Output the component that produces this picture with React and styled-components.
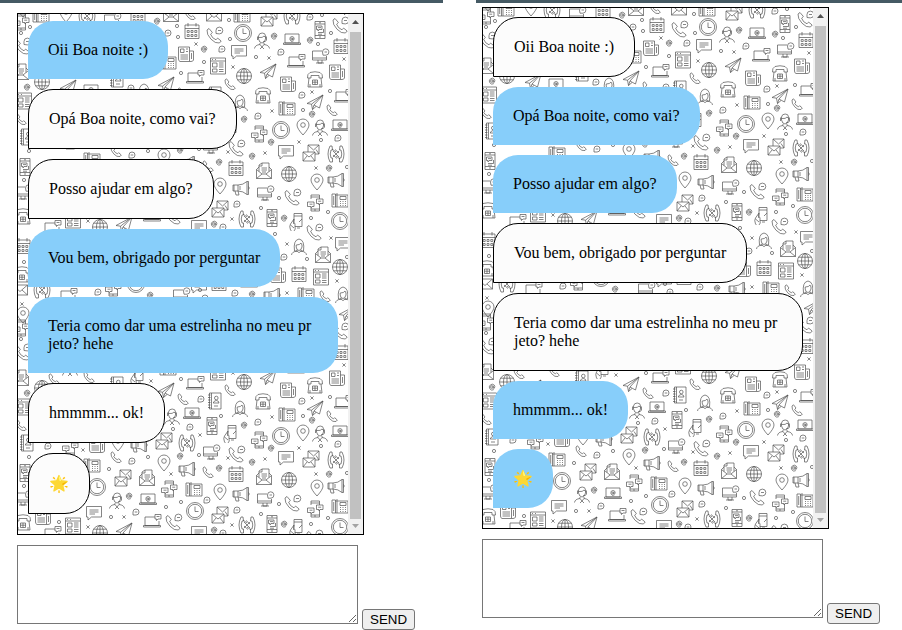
import React, { useId } from "react";
import styled, { createGlobalStyle } from "styled-components";

const GlobalStyle = createGlobalStyle`
  body {
    margin: 0;
    background: #fff;
    color: #000;
    font-family: "Liberation Serif", "Times New Roman", serif;
    font-size: 16px;
    line-height: 18px;
  }
`;

const Page = styled.main`
  display: grid;
  grid-template-columns: 443fr 426fr;
  column-gap: 33px;
`;

const Client = styled.section`
  border-top: 3px solid #455a64;
  padding: ${(p) => (p.$raised ? "4px 0 0 6px" : "10px 0 0 17px")};
`;

const ChatBox = styled.div`
  box-sizing: border-box;
  display: flex;
  width: 100%;
  max-width: 347px;
  min-height: 522px;
  border: 1px solid #000;
`;

const Conversation = styled.div`
  position: relative;
  flex: 1;
  min-width: 0;
  display: flex;
  overflow: hidden;
`;

const WallpaperSvg = styled.svg`
  position: absolute;
  inset: 0;
  width: 100%;
  height: 100%;
`;

const MessageList = styled.ul`
  position: relative;
  flex: 1;
  display: flex;
  flex-direction: column;
  align-items: flex-start;
  justify-content: flex-end;
  gap: 10px;
  margin: 0;
  padding: 0 10px 20px;
  list-style: none;
`;

const Bubble = styled.li`
  align-self: ${(p) => (p.$wide ? "stretch" : "flex-start")};
  padding: 20px;
  border: ${(p) => (p.$mine ? "none" : "1px solid #000")};
  border-radius: 25px 25px 25px 0;
  background: ${(p) => (p.$mine ? "#87cefa" : "#fcfcfc")};
  white-space: pre-line;
  overflow-wrap: anywhere;
`;

const Emoji = styled.span`
  display: block;
  line-height: 19px;
  font-family: "Liberation Serif", "Noto Color Emoji", serif;
`;

const ScrollTrack = styled.div`
  flex: 0 0 15px;
  display: flex;
  flex-direction: column;
  align-items: center;
  background: #f1f1f1;
`;

const ScrollArrow = styled.svg`
  width: 15px;
  height: 15px;
  fill: ${(p) => (p.$dim ? "#a3a3a3" : "#505050")};
`;

const ScrollThumb = styled.div`
  flex: 1;
  width: 11px;
  margin-top: 3px;
  background: #c1c1c1;
`;

const Composer = styled.form`
  display: flex;
  align-items: flex-end;
  gap: 4px;
  margin-top: 10px;
`;

const MessageInput = styled.textarea`
  box-sizing: border-box;
  flex: 0 1 341px;
  min-width: 0;
  height: 79px;
  margin: 0 0 6px;
  border: 1px solid #767676;
  background: #fff;
`;

const SendButton = styled.button`
  height: 21px;
  border: 1px solid #767676;
  border-radius: 3px;
  padding: 0 7px;
  background: #efefef;
  color: #000;
  font-family: "Liberation Sans", Arial, sans-serif;
`;

const ICONS = {
  circle: "M-1.6 0a1.6 1.6 0 1 0 3.2 0a1.6 1.6 0 1 0-3.2 0",
  x: "M-1.6-1.6L1.6 1.6M1.6-1.6L-1.6 1.6",
  at: "M1.2-1.2V1Q1.5 1.8 2.4 1.2Q3.4-.5 2.2-2A2.9 2.9 0 1 0 1.8 2.6M1.2 0A1.3 1.3 0 1 1-1.4 0A1.3 1.3 0 1 1 1.2 0",
  bubble: "M-3 3V0A3 3 0 1 1 0 3ZM-1.3 0H1.3",
  clock:
    "M-8.5 0a8.5 8.5 0 1 0 17 0a8.5 8.5 0 1 0-17 0M-6.7 0a6.7 6.7 0 1 0 13.4 0a6.7 6.7 0 1 0-13.4 0M0-4.5V.5H3.5",
  globe:
    "M-7.5 0a7.5 7.5 0 1 0 15 0a7.5 7.5 0 1 0-15 0M-3.5 0a3.5 7.5 0 1 0 7 0a3.5 7.5 0 1 0-7 0M0-7.5V7.5M-7.5 0H7.5M-6.4-3.8H6.4M-6.4 3.8H6.4",
  calendar:
    "M-7-6H7V7.5H-7ZM-7-2.5H7M-4-8V-4.5M4-8V-4.5M-4.8-.5h2v2h-2zM-1-.5h2v2h-2zM2.8-.5h2v2h-2zM-4.8 3.5h2v2h-2zM-1 3.5h2v2h-2zM2.8 3.5h2v2h-2z",
  page: "M-7.5-8H7.5V8H-7.5ZM-7.5-5H7.5M-5.5-3H-1V1H-5.5ZM1-3H5.5M1-1H5.5M1 1H5.5M-5.5 3H-1V6H-5.5ZM1 3.5H5.5M1 5.5H5.5M-6-6.5h1M-3-6.5h1",
  news: "M-7.5-7H3.5V7.5H-6Q-7.5 7-7.5 5ZM3.5-3H7.5V6Q7 7.5 5 7.5H3.5M-5.5-5H-2V-1.5H-5.5ZM0-5H2M0-2.5H2M-5.5 1H2M-5.5 3H2M-5.5 5H2M5.5-1V5",
  chat: "M-7.5-5.5H7.5V5H-2.5L-6 8V5H-7.5ZM-4.5-2H4.5M-4.5 0H4.5M-4.5 2H1",
  laptopAt:
    "M-7-5H7V4H-7ZM-8.5 4H8.5V5.5H-8.5ZM.9-.8V.8Q1.5 1.3 2.2.4Q2.4-2.5 0-2.5A2.4 2.4 0 1 0 1.4 2M.9 0A1 1 0 1 1-1.1 0A1 1 0 1 1 .9 0",
  laptop: "M3-4H-7V4.5H7V0M-8.5 4.5H8.5V6H-8.5ZM3-6.5H9V-2H6L4.5-.5V-2H3ZM4.5-4.5h3",
  monitor:
    "M2-5H-7.5V4H6.5V0M-7.5 2H6.5M-2 4V7H2V4M-4 7H4M2.5-4A3.2 3.2 0 1 1 6-.8H3ZM4.5-4h2.5",
  phone:
    "M-5-4L-3.5-5.2L-1-2L-2.3-.7Q-1 2 1.5 2.8L2.6 1.7L5.3 4L4 5.5Q1 6.5-2.3 2.8Q-5.5-.6-5-4Z",
  phoneBubble:
    "M-8-5L-6-6.5L-2.6-2.5L-4.4-.8Q-3 3.3 1 4.8L2.6 3.1L6.2 6L4.4 8Q.4 8.8-4 4.2Q-8.5-.5-8-5ZM1-1.5V-4.5A3.4 3.4 0 1 1 4.4-1.1ZM3-4.5H6",
  mobile:
    "M-5-8.5H5V8.5H-5ZM-5-6H5M-5 5.5H5M-1-7.2h2M-1 7h2M-3.5-4H2V-.5H-1L-2 1V-.5H-3.5ZM-2 2.5H3.5V-1M-2-2.4h3M-2 4.2h4",
  links:
    "M-4-4V-8H4.5V-4M4.5 1V8H-4V5M-4-6H4.5M-4 6H4.5M-7.5-1H-1V3.5H-3L-4 5V3.5H-7.5ZM1.5-4H8V.5H5L4 2V.5H1.5ZM-5.5 1.2h3M3.2-1.8h3M-1 7h2",
  hand: "M-2-8.5H6V4.5H-1M-2-8.5V2M-2-6H6M-2 2Q-3 0-2-3L-5.5 2Q-7 4-5.5 8L-4.5 9M-1 1.5V5Q0 7-2 9M1 6h3M6-3L3 0M-5.5 3L-2 6",
  pin: "M0 8Q-6 1.5-6-2A6 6 0 1 1 6-2Q6 1.5 0 8ZM-2.3-2a2.3 2.3 0 1 0 4.6 0a2.3 2.3 0 1 0-4.6 0",
  megaphone:
    "M-8-3H-3V3H-8ZM-3-3Q2-3 6-6.5V6.5Q2 3-3 3M6-6.5h1.5V6.5H6M-7-3V3M-6 3L-5 7H-2L-3 3M7.5-1.5Q9 0 7.5 1.5M-1-2V2",
  mails:
    "M-8-1H4V8H-8ZM-8-1L-2 4L4-1M-8 8L-4 3M4 8L0 3M-3-1V-8H8V1H4M-3-8L2.5-3L8-8M8 1L5-3.5",
  openMail:
    "M-7.5-1.5V7.5H7.5V-1.5L5-4M-5-4L-7.5-1.5L-2 3H2L7.5-1.5M-7.5 7.5L-2 3M7.5 7.5L2 3M-5 .5V-6L-2-8H5V.5M-2-8V-5H-5M-2.5-3H3M-2.5-1H3M-2 1H2",
  mail: "M-7.5-5H7.5V5H-7.5ZM-7.5-5L0 1.5L7.5-5M-7.5 5L-2 0M7.5 5L2 0",
  tel: "M-7.5-1Q-8-5-5-6.5Q0-8 5-6.5Q8-5 7.5-1H4V-3.5H-4V-1ZM-6-1L-7 8H7L6-1M-2.5 1h5V5.5h-5ZM-2.5 3.2h5M0 1v4.5M-5 5V8M5 5V8",
  fax: "M-8-6H-4.5V7H-8ZM-4.5-5H8V7H-4.5M-3-7V7M0-3.5H6V-.5H0ZM0 1.5h1M2.5 1.5h1M5 1.5h1M0 3.5h1M2.5 3.5h1M5 3.5h1M0 5.5h1M2.5 5.5h1M5 5.5h1M-6.3-4V5",
  book: "M-5.5-8H6V8H-5.5ZM-3.5-8V8M-7-6H-4.5M-7-3.5H-4.5M-7-1H-4.5M-7 1.5H-4.5M-7 4H-4.5M-7 6.5H-4.5M-.5-3a1.8 1.8 0 1 0 3.6 0a1.8 1.8 0 1 0-3.6 0M-1.8 2Q-1-.5 1.3-.5Q3.8-.5 4 2ZM-1 5h4",
  plane: "M-8 1.5L8-7L4.5 6L-1 3L8-7L-3.5 2.2L-2.5 7.5L-1 3M-2.5 7.5L1 4.5M-8 1.5L-3.5 2.2",
  man: "M-3.5-2V-5Q-3-8 .2-8Q3.5-8 3.5-5V-2Q2.5 2 0 2Q-2.5 2-3.5-2ZM-3.5-3.5Q1-3 2-5L3.5-3.5M-4.5-4.5V-1M4.5-4.5V-1Q4 1 1 .8M-7.5 7.5Q-7 4-2 3.5V2M2 2V3.5Q7 4 7.5 7.5M-2 3.5L0 6L2 3.5M0 6L-2 8M0 6L2 8",
  woman:
    "M-4.5 4Q-6-7 0-8Q6-7 4.5 4M-2.8-2Q1-2 2-4L3-2V0Q2 3.5 0 3.5Q-2.5 3.5-2.8 0ZM-7.5 8Q-7 4.5-2 4.2V2.8M2 2.8V4.2Q7 4.5 7.5 8M-2 4.2Q0 7 2 4.2M-4.5 4H-2M2 4h2.5",
  phones:
    "M-4-8H-6Q-10 0-6 8H-3.5V4H-5Q-6.5 0-5-4H-3.5ZM4-8H6Q10 0 6 8H3.5V4H5Q6.5 0 5-4H3.5ZM-3-3L3 3M-3 1L1 4.5M-1-4.5L3-1M3-3L-3 3M-4-5L0-2M4 5L0 2",
};

/* Each doodle is placed by its centre inside one wallpaper tile. */
const TILE_HEIGHT = 306;
const DOODLES = [
  ["mail", 196, 2], ["circle", 211, 6], ["fax", 224, 1], ["clock", 225, 19],
  ["phoneBubble", 197, 21], ["circle", 212, 25], ["at", 186, 35], ["bubble", 204, 35],
  ["chat", 221, 37], ["page", 200, 52], ["x", 215, 53], ["circle", 186, 48],
  ["man", 244, 27], ["at", 256, 22], ["laptopAt", 274, 25], ["mails", 251, 4],
  ["phones", 274, 2], ["bubble", 292, 3], ["circle", 304, 1], ["mobile", 302, 16],
  ["at", 292, 26], ["circle", 300, 30], ["phoneBubble", 323, 11], ["circle", 313, 19],
  ["calendar", 323, 32], ["monitor", 302, 42], ["x", 326, 45], ["bubble", 263, 38],
  ["circle", 238, 43], ["x", 251, 44], ["laptop", 278, 47], ["news", 319, 58],
  ["plane", 250, 57], ["globe", 226, 62], ["phone", 212, 70], ["tel", 297, 65],
  ["news", 270, 70], ["tel", 245, 81], ["x", 294, 78], ["circle", 312, 77],
  ["bubble", 284, 81], ["laptop", 325, 82], ["plane", 297, 88], ["woman", 222, 89],
  ["fax", 269, 94], ["x", 254, 97], ["circle", 285, 96], ["at", 294, 100],
  ["phone", 314, 96], ["bubble", 240, 102], ["at", 226, 105], ["links", 241, 120],
  ["clock", 263, 116], ["pin", 285, 113], ["man", 302, 114], ["laptopAt", 322, 111],
  ["bubble", 320, 124], ["circle", 303, 126], ["at", 253, 128], ["x", 281, 128],
  ["phoneBubble", 219, 134], ["chat", 268, 137], ["mails", 293, 139], ["phones", 318, 140],
  ["at", 234, 142], ["x", 247, 139], ["x", 210, 138], ["monitor", 193, 132],
  ["at", 201, 148], ["calendar", 218, 154], ["openMail", 246, 157], ["globe", 271, 160],
  ["x", 298, 154], ["at", 311, 154], ["circle", 329, 153], ["megaphone", 318, 166],
  ["pin", 299, 168], ["pin", 202, 172], ["megaphone", 223, 174], ["monitor", 247, 179],
  ["phoneBubble", 275, 183], ["circle", 261, 184], ["fax", 322, 186], ["links", 297, 189],
  ["bubble", 219, 190], ["mails", 202, 195], ["circle", 243, 194], ["circle", 310, 198],
  ["x", 214, 205], ["phones", 229, 205], ["mobile", 254, 204], ["at", 266, 204],
  ["hand", 278, 208], ["circle", 293, 204], ["clock", 322, 207], ["at", 196, 210],
  ["chat", 181, 212], ["bubble", 205, 213], ["phoneBubble", 297, 218], ["circle", 257, 220],
  ["x", 313, 224], ["chat", 325, 229], ["woman", 281, 233], ["x", 269, 230],
  ["openMail", 305, 241], ["circle", 329, 243], ["bubble", 266, 243], ["circle", 289, 245],
  ["globe", 322, 253], ["calendar", 281, 260], ["page", 303, 263], ["news", 260, 261],
  ["x", 319, 267], ["calendar", 201, 269], ["megaphone", 254, 281], ["x", 269, 279],
  ["fax", 288, 280], ["bubble", 217, 279], ["phone", 307, 282], ["woman", 325, 281],
  ["plane", 329, 299], ["laptop", 177, 63], ["plane", 148, 70], ["phone", 165, 79],
  ["bubble", 183, 79], ["book", 197, 81], ["circle", 163, 59], ["man", 154, 97],
  ["laptopAt", 174, 93], ["circle", 203, 96], ["mobile", 194, 106], ["hand", 212, 114],
  ["bubble", 172, 107], ["circle", 155, 109], ["x", 182, 115], ["phones", 169, 123],
  ["mails", 146, 121], ["at", 162, 136], ["circle", 181, 135],
  ["pin", 146, 143], ["megaphone", 169, 149], ["phone", 190, 152], ["x", 153, 154],
  ["links", 151, 169], ["fax", 176, 169], ["circle", 148, 187], ["circle", 163, 182],
  ["bubble", 189, 180], ["clock", 177, 191], ["phoneBubble", 156, 202], ["book", 9, 123],
  ["links", 52, 127], ["bubble", 30, 126], ["x", 65, 130], ["news", 79, 125],
  ["pin", 100, 123], ["megaphone", 121, 125], ["phone", 98, 137], ["bubble", 114, 141],
  ["circle", 130, 137], ["circle", 91, 149], ["fax", 74, 145], ["circle", 11, 137],
  ["mails", 105, 158], ["openMail", 129, 158], ["clock", 79, 167], ["man", 99, 181],
  ["at", 111, 176], ["laptopAt", 130, 179], ["bubble", 118, 192], ["chat", 76, 192],
  ["circle", 93, 197], ["x", 106, 197], ["laptop", 134, 201], ["circle", 41, 202],
  ["page", 55, 206], ["x", 70, 207], ["globe", 82, 213], ["plane", 106, 210],
  ["mobile", 7, 153], ["circle", 6, 166], ["monitor", 5, 178], ["tel", 5, 202],
  ["news", 25, 197], ["laptop", 34, 213], ["links", 3, 8], ["fax", 23, 1],
  ["pin", 48, 0], ["phones", 69, 2], ["monitor", 94, 6], ["calendar", 120, 2],
  ["at", 139, 7], ["openMail", 153, 0], ["phone", 172, 0], ["circle", 159, 12],
  ["calendar", 174, 17], ["circle", 160, 23], ["bubble", 150, 19], ["x", 178, 30],
  ["news", 168, 40], ["fax", 150, 48], ["book", 99, 65], ["bubble", 113, 74],
  ["woman", 126, 78], ["laptopAt", 73, 76], ["plane", 50, 73], ["globe", 24, 68],
  ["at", 9, 73], ["openMail", 3, 58], ["phoneBubble", 5, 32], ["circle", 3, 19],
  ["circle", 12, 13], ["page", 6, 87], ["phone", 3, 105], ["phone", 36, 59],
  ["man", 52, 48], ["phone", 71, 57], ["hand", 119, 56], ["x", 133, 61],
  ["phones", 24, 276], ["laptop", 50, 281], ["bubble", 80, 278], ["links", 95, 274],
  ["clock", 118, 270], ["at", 132, 281], ["monitor", 163, 281], ["circle", 182, 276],
  ["bubble", 187, 284], ["chat", 181, 271], ["at", 234, 280], ["laptop", 231, 267],
  ["calendar", 5, 232], ["circle", 6, 248], ["tel", 4, 260], ["mail", 2, 276],
  ["x", 4, 290], ["pin", 5, 301],
];

function Doodle({ name, x, y }) {
  return <path d={ICONS[name]} transform={`translate(${x} ${y})`} />;
}

function Wallpaper() {
  const id = useId();
  const copies = [-TILE_HEIGHT, 0, TILE_HEIGHT];
  return (
    <WallpaperSvg aria-hidden="true">
      <defs>
        <pattern id={id} width="331" height={TILE_HEIGHT} patternUnits="userSpaceOnUse">
          <g fill="none" stroke="#505050" strokeWidth="0.7">
            {copies.map((shift) =>
              DOODLES.filter(([, , y]) => y + shift > -10 && y + shift < TILE_HEIGHT + 10).map(
                ([name, x, y], i) => <Doodle key={`${shift}:${i}`} name={name} x={x} y={y + shift} />
              )
            )}
          </g>
        </pattern>
      </defs>
      <rect width="100%" height="100%" fill={`url(#${id})`} />
    </WallpaperSvg>
  );
}

const MESSAGES = [
  { from: "ana", text: "Oii Boa noite :)" },
  { from: "leo", text: "Opá Boa noite, como vai?" },
  { from: "leo", text: "Posso ajudar em algo?" },
  { from: "ana", text: "Vou bem, obrigado por perguntar" },
  { from: "ana", text: "Teria como dar uma estrelinha no meu pr\njeto? hehe", wide: true },
  { from: "leo", text: "hmmmm... ok!" },
  { from: "leo", text: "🌟", emoji: true },
];

function Chat({ user, raised }) {
  return (
    <Client $raised={raised}>
      <ChatBox>
        <Conversation>
          <Wallpaper />
          <MessageList>
            {MESSAGES.map((m) => (
              <Bubble key={m.text} $mine={m.from === user} $wide={m.wide}>
                {m.emoji ? <Emoji>{m.text}</Emoji> : m.text}
              </Bubble>
            ))}
          </MessageList>
        </Conversation>
        <ScrollTrack aria-hidden="true">
          <ScrollArrow viewBox="0 0 15 15">
            <path d="M4 10L7.5 6L11 10Z" />
          </ScrollArrow>
          <ScrollThumb />
          <ScrollArrow $dim viewBox="0 0 15 15">
            <path d="M4 5L7.5 9L11 5Z" />
          </ScrollArrow>
        </ScrollTrack>
      </ChatBox>
      <Composer onSubmit={(e) => e.preventDefault()}>
        <MessageInput aria-label="Message" />
        <SendButton type="submit">SEND</SendButton>
      </Composer>
    </Client>
  );
}

export default function App() {
  return (
    <>
      <GlobalStyle />
      <Page>
        <Chat user="ana" />
        <Chat user="leo" raised />
      </Page>
    </>
  );
}
